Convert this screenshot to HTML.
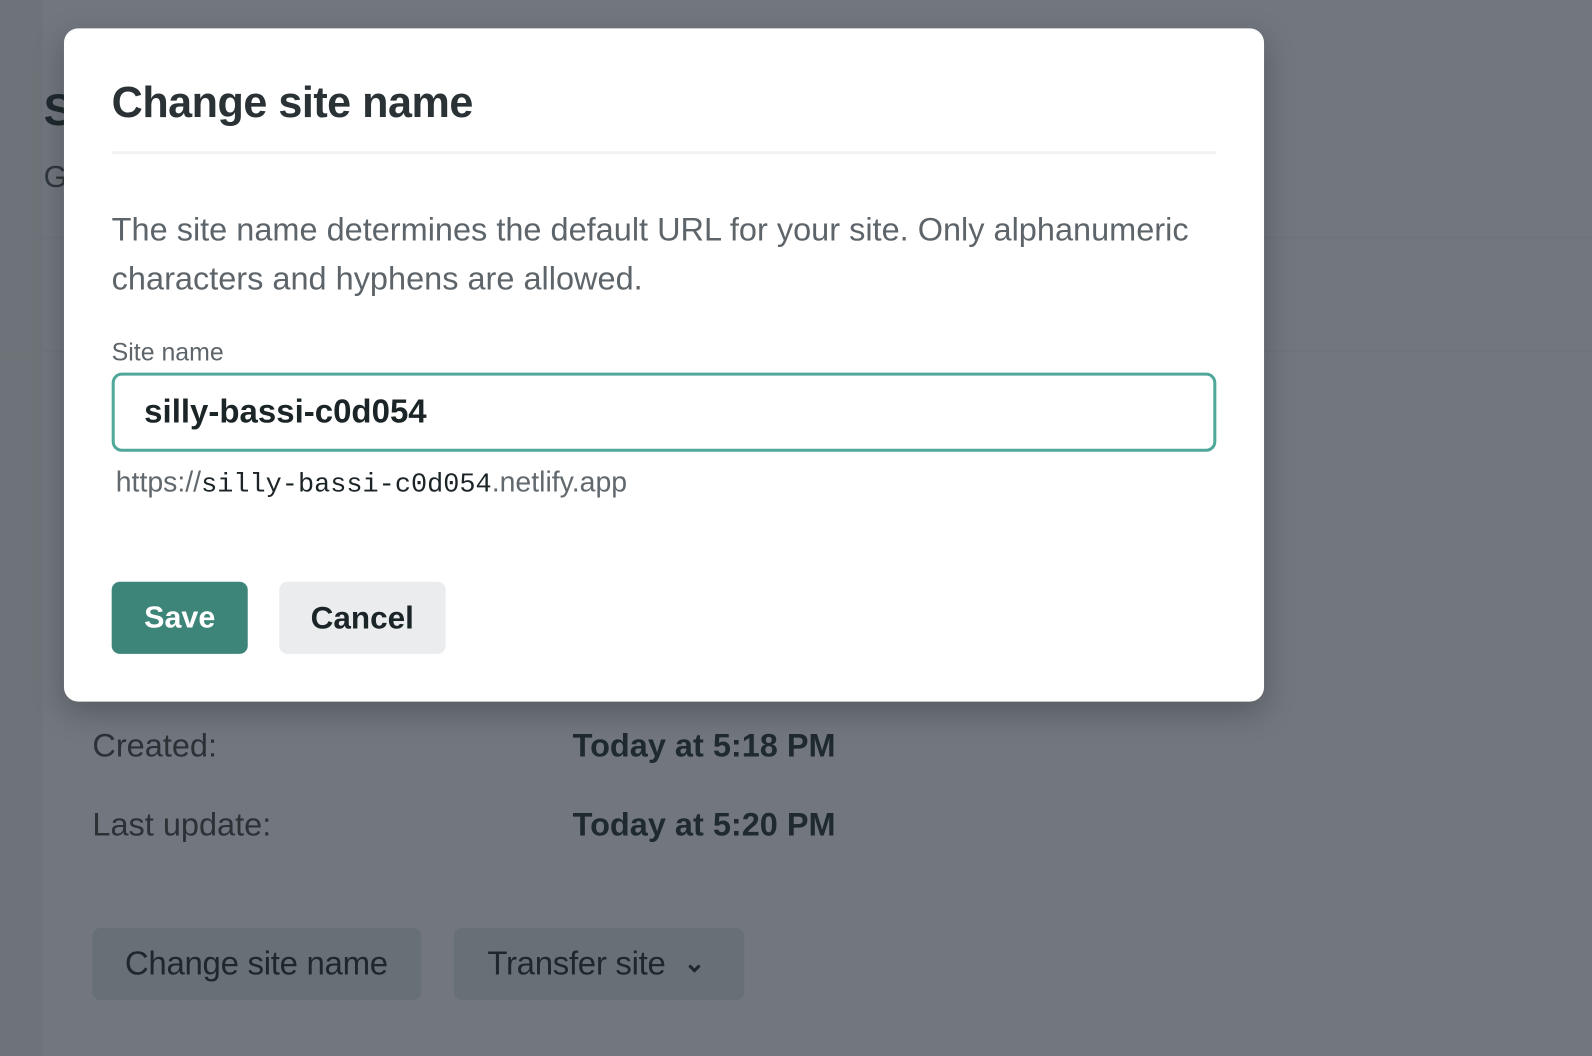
<!DOCTYPE html>
<html><head><meta charset="utf-8"><style>
*{margin:0;padding:0;box-sizing:border-box}
body{width:1592px;height:1040px;overflow:hidden;background:#6d7378;font-family:"Liberation Sans",sans-serif;position:relative}
.wrap{position:absolute;left:0;top:0;width:1568px;height:1024px;transform:scale(1.0153);transform-origin:0 0}
.abs{position:absolute;white-space:nowrap}
.card{position:absolute;left:42px;top:0;width:1600px;height:1040px;background:#72777f}
.modal{position:absolute;left:63px;top:28px;width:1182px;height:663px;background:#fff;border-radius:14px;box-shadow:0 10px 30px rgba(0,0,0,.25)}
.btnbg{position:absolute;background:#687077;border-radius:8px;color:#1e272b;font-size:32.5px;letter-spacing:-0.3px}
</style></head><body>
<div class="wrap">
<div class="card"></div>
<div class="abs" style="left:0;top:233px;width:1592px;height:2px;background:#6f747b"></div>
<div class="abs" style="left:0;top:345px;width:1592px;height:2px;background:#6f747b"></div>
<div class="abs" style="left:43px;top:84px;font-size:44px;font-weight:bold;color:#1f2a2e">S</div>
<div class="abs" style="left:43px;top:158px;font-size:30px;color:#2f383c">G</div>
<div class="abs" style="left:91px;top:716px;font-size:32px;color:#2a3236">Created:</div>
<div class="abs" style="left:564px;top:716px;font-size:32px;font-weight:bold;color:#1f2a2e">Today at 5:18 PM</div>
<div class="abs" style="left:91px;top:794px;font-size:32px;color:#2a3236">Last update:</div>
<div class="abs" style="left:564px;top:794px;font-size:32px;font-weight:bold;color:#1f2a2e">Today at 5:20 PM</div>
<div class="btnbg" style="left:91px;top:914px;width:324px;height:71px;padding:17px 0 0 32px">Change site name</div>
<div class="btnbg" style="left:447px;top:914px;width:286px;height:71px;padding:17px 0 0 33px">Transfer site <svg width="16" height="12" viewBox="0 0 16 12" style="margin-left:12px"><path d="M3 3l5 5 5-5" stroke="#1e272b" stroke-width="3" fill="none"/></svg></div>
<div class="modal">
<div class="abs" style="left:47px;top:50px;font-size:42.5px;font-weight:bold;color:#2a3236;letter-spacing:-0.5px">Change site name</div>
<div class="abs" style="left:47px;top:121px;width:1088px;height:3px;background:#f2f3f4"></div>
<div class="abs" style="left:47px;top:174px;font-size:32px;line-height:48px;color:#5e656a;white-space:normal;width:1135px">The site name determines the default URL for your site. Only alphanumeric characters and hyphens are allowed.</div>
<div class="abs" style="left:47px;top:306px;font-size:24.5px;color:#5e656a">Site name</div>
<div class="abs" style="left:47px;top:339px;width:1088px;height:78px;border:3px solid #4fa89a;border-radius:10px"></div>
<div class="abs" style="left:79px;top:359px;font-size:32.5px;font-weight:bold;color:#1b2427">silly-bassi-c0d054</div>
<div class="abs" style="left:51px;top:431px;font-size:28px;color:#62696e">https://<span style="font-family:'Liberation Mono',monospace;color:#1b2427;font-size:26.5px">silly-bassi-c0d054</span>.netlify.app</div>
<div class="abs" style="left:47px;top:545px;width:134px;height:71px;background:#3e8579;border-radius:8px;color:#fff;font-size:30px;font-weight:bold;padding:19px 0 0 32px">Save</div>
<div class="abs" style="left:212px;top:545px;width:164px;height:71px;background:#eaecee;border-radius:8px;color:#1b2427;font-size:31px;font-weight:bold;padding:18px 0 0 31px">Cancel</div>
</div>
</div>
</body></html>
